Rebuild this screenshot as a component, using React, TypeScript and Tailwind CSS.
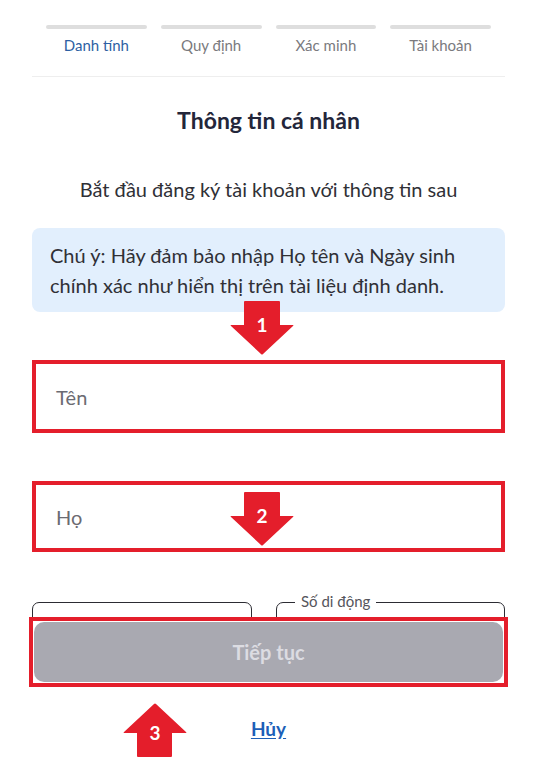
import React from "react";

const font = { fontFamily: "Lato, 'Noto Sans', sans-serif" };

function Arrow({ dir, n }: { dir: "down" | "up"; n: string }) {
  return (
    <div className="relative w-[64px] h-[54px]">
      <svg viewBox="0 0 64 54" className="absolute inset-0 w-full h-full">
        {dir === "down" ? (
          <path d="M14 1 Q14 0 15 0 L49 0 Q50 0 50 1 L50 24 L63 24 Q64 24 63 25 L33 53 Q32 54 31 53 L1 25 Q0 24 1 24 L14 24 Z" fill="#e41e2b" />
        ) : (
          <path d="M15 54 Q14 54 14 53 L14 30 L1 30 Q0 30 1 29 L31 1 Q32 0 33 1 L63 29 Q64 30 63 30 L49 30 L49 53 Q49 54 48 54 Z" fill="#e41e2b" />
        )}
      </svg>
      <span
        className={`absolute left-0 right-0 text-center text-white font-bold text-[19px] leading-none ${dir === "down" ? "top-[14px]" : "top-[20px]"}`}
      >
        {n}
      </span>
    </div>
  );
}

function Steps() {
  const steps = ["Danh tính", "Quy định", "Xác minh", "Tài khoản"];
  return (
    <div className="grid grid-cols-4 gap-[14px] px-[14px] pt-[25px] pb-[22px] border-b border-[#eeeeee]">
      {steps.map((s, i) => (
        <div key={s} className="flex flex-col items-center">
          <div className="h-[4px] w-full rounded-full bg-[#dedede]" />
          <div className={`mt-[7px] text-[15px] leading-[18px] ${i === 0 ? "text-[#2d5fa3]" : "text-[#7a7a7e]"}`}>
            {s}
          </div>
        </div>
      ))}
    </div>
  );
}

export default function App() {
  return (
    <div className="relative h-[781px] w-[537px] overflow-hidden bg-white" style={font}>
      <div className="px-[32px]">
        <Steps />

        <h1 className="mt-[30px] text-center text-[23px] font-bold leading-[26px] text-[#23263a]">
          Thông tin cá nhân
        </h1>
        <p className="mt-[44px] text-center text-[20px] leading-[24px] text-[#303036]">
          Bắt đầu đăng ký tài khoản với thông tin sau
        </p>

        <div className="mt-[27px] rounded-[8px] bg-[#e2effd] px-[18px] py-[12px] text-[20px] leading-[30px] text-[#303036]">
          Chú ý: Hãy đảm bảo nhập Họ tên và Ngày sinh chính xác như hiển thị trên tài liệu định danh.
        </div>

        <div className="mt-[48px] flex h-[73px] items-center border-[4px] border-[#e41e2b] px-[20px] text-[20px] text-[#6b6b72]">
          Tên
        </div>

        <div className="mt-[48px] flex h-[71px] items-center border-[4px] border-[#e41e2b] px-[20px] text-[20px] text-[#6b6b72]">
          Họ
        </div>

        <div className="mt-[50px] flex gap-[24px]">
          <div className="h-[60px] w-[220px] rounded-[7px] border-[1.5px] border-[#2c2c33]" />
          <div className="relative h-[60px] flex-1 rounded-[7px] border-[1.5px] border-[#2c2c33]">
            <span className="absolute left-[18px] top-[-11px] bg-white px-[6px] text-[15px] leading-[18px] text-[#55555c]">
              Số di động
            </span>
          </div>
        </div>
      </div>

      {/* bottom bar */}
      <div className="absolute bottom-0 left-0 right-0 h-[164px] bg-white px-[29px]">
        <div className="border-[4px] border-[#e41e2b] bg-white h-[70px]">
          <div className="m-[1px] flex h-[60px] items-center justify-center rounded-[10px] bg-[#a9a9b1] text-[20px] font-bold text-[#dcdce2]">
            Tiếp tục
          </div>
        </div>
        <div className="mt-[28px] text-center">
          <span className="text-[19px] font-bold text-[#1d5fb8] underline underline-offset-2">Hủy</span>
        </div>
      </div>

      {/* annotation arrows */}
      <div className="absolute left-[230px] top-[301px]">
        <Arrow dir="down" n="1" />
      </div>
      <div className="absolute left-[230px] top-[492px]">
        <Arrow dir="down" n="2" />
      </div>
      <div className="absolute left-[123px] top-[703px]">
        <Arrow dir="up" n="3" />
      </div>
    </div>
  );
}
